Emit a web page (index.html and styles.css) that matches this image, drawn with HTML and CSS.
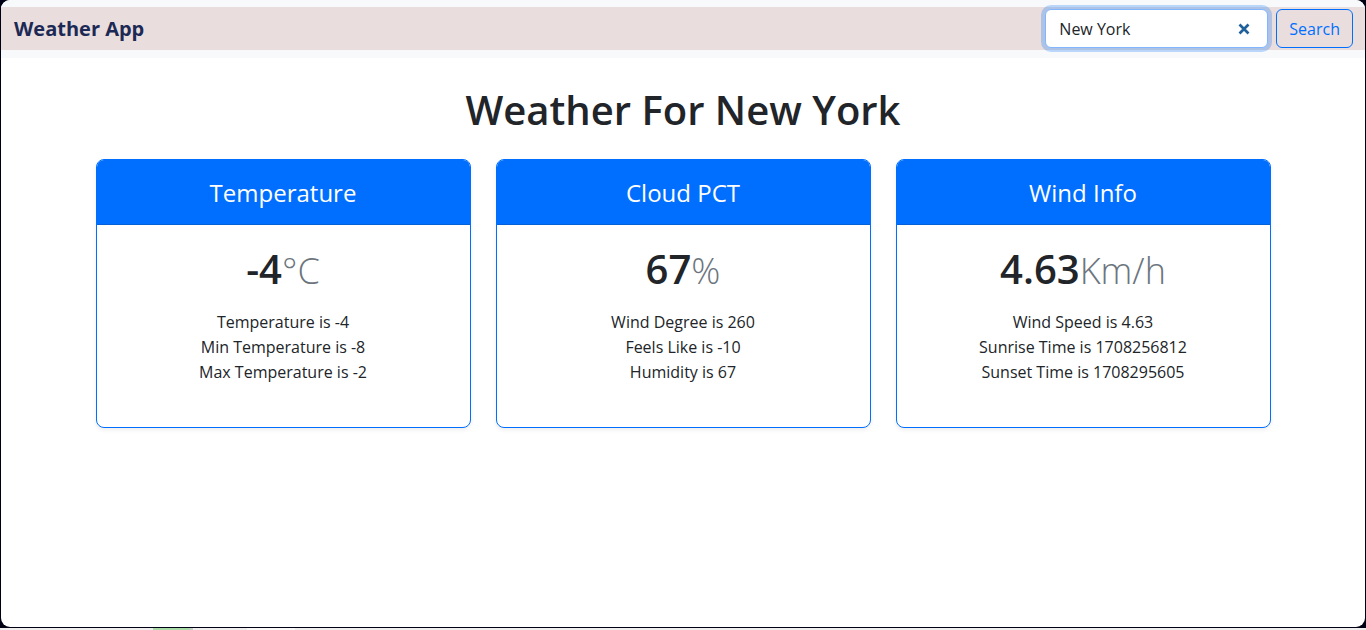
FILE: index.html
```html
<!DOCTYPE html>
<html lang="en">
<head>
<meta charset="utf-8">
<meta name="viewport" content="width=device-width, initial-scale=1">
<title>Weather App</title>
<link rel="stylesheet" href="styles.css">
</head>
<body>
<div class="window">
  <header class="navbar">
    <nav class="navbar-inner">
      <a class="brand" href="#">Weather App</a>
      <form class="search" role="search">
        <div class="search-field">
          <input class="search-input" type="text" value="New York" aria-label="City">
          <button class="clear" type="reset" aria-label="Clear">
            <svg viewBox="0 0 12 12" width="12" height="12"><path d="M1.5 1.5 10.5 10.5M10.5 1.5 1.5 10.5" fill="none" stroke="#20619c" stroke-width="2.7"/></svg>
          </button>
        </div>
        <button class="search-button" type="submit">Search</button>
      </form>
    </nav>
  </header>
  <main class="container">
    <h1 class="title">Weather For New York</h1>
    <div class="cards">
      <section class="card">
        <h2 class="card-header">Temperature</h2>
        <div class="card-body">
          <p class="value">-4<small class="unit">°C</small></p>
          <ul class="details">
            <li>Temperature is -4</li>
            <li>Min Temperature is -8</li>
            <li>Max Temperature is -2</li>
          </ul>
        </div>
      </section>
      <section class="card">
        <h2 class="card-header">Cloud PCT</h2>
        <div class="card-body">
          <p class="value">67<small class="unit">%</small></p>
          <ul class="details">
            <li>Wind Degree is 260</li>
            <li>Feels Like is -10</li>
            <li>Humidity is 67</li>
          </ul>
        </div>
      </section>
      <section class="card">
        <h2 class="card-header">Wind Info</h2>
        <div class="card-body">
          <p class="value">4.63<small class="unit">Km/h</small></p>
          <ul class="details">
            <li>Wind Speed is 4.63</li>
            <li>Sunrise Time is 1708256812</li>
            <li>Sunset Time is 1708295605</li>
          </ul>
        </div>
      </section>
    </div>
  </main>
</div>
<div class="taskbar"></div>
</body>
</html>
```
FILE: styles.css
```css
* { box-sizing: border-box; }

body {
  display: flex;
  flex-direction: column;
  min-height: 100vh;
  margin: 0;
  background: #000015;
  color: #212529;
  font: 16px/25px "Open Sans", "Noto Sans", sans-serif;
}

.window {
  flex: 1;
  margin: 0 1px 1px;
  overflow: hidden;
  border-radius: 9px;
  background: #fff;
}

.navbar {
  padding: 7px 0 8px;
  background: #f8f9fa;
}

.navbar-inner {
  display: flex;
  align-items: center;
  justify-content: space-between;
  padding: 2px 12px 2px 13px;
  background: #e9dedd;
}

.brand {
  color: #1c2955;
  font-size: 20px;
  font-weight: 700;
  text-decoration: none;
}

.search { display: flex; gap: 8px; }

.search-field { position: relative; }

.search-input {
  width: 223px;
  height: 39px;
  padding: 0 36px 0 13px;
  border: 1px solid #80b7ff;
  border-radius: 6px;
  outline: 0;
  background: #fff;
  box-shadow: 0 0 0 4px rgba(0, 111, 255, .25);
  color: #212529;
  font: inherit;
  display: block;
}

.clear {
  position: absolute;
  top: 0;
  bottom: 0;
  right: 18px;
  display: flex;
  align-items: center;
  padding: 0;
  border: 0;
  background: none;
}

.search-button {
  height: 39px;
  padding: 1px 12px 0;
  border: 1px solid #006fff;
  border-radius: 6px;
  background: transparent;
  color: #006fff;
  font: inherit;
}

.container {
  max-width: 1199px;
  margin: 0 auto;
  padding: 24px 12px;
}

.title {
  margin: 0 0 21px;
  font-size: 40px;
  font-weight: 600;
  line-height: 56px;
  text-align: center;
}

.cards {
  display: grid;
  grid-template-columns: repeat(3, 1fr);
  gap: 25px;
}

.card {
  overflow: hidden;
  border: 1px solid #006fff;
  border-radius: 8px;
  background: #fff;
  box-shadow: 0 2px 4px rgba(0, 0, 0, .075);
  text-align: center;
}

.card-header {
  margin: 0;
  padding: 17px 16px 15px;
  border-bottom: 1px solid #0561d6;
  background: #006fff;
  color: #fff;
  font-size: 24px;
  font-weight: 400;
  line-height: 32px;
}

.card-body { padding: 16px 16px 42px; }

.value {
  margin: 0 0 11px;
  font-size: 40px;
  font-weight: 600;
  line-height: 56px;
}

.unit {
  color: #6c757d;
  font-size: 36px;
  font-weight: 300;
}

.details {
  margin: 0;
  padding: 0;
  list-style: none;
}

.taskbar {
  height: 2px;
  background: linear-gradient(90deg, #eee 153px, #a9dba7 153px 190px, #ccc 190px 193px, #eee 193px 247px, #f9f9f9 247px 295px, #eee 295px);
}
```
